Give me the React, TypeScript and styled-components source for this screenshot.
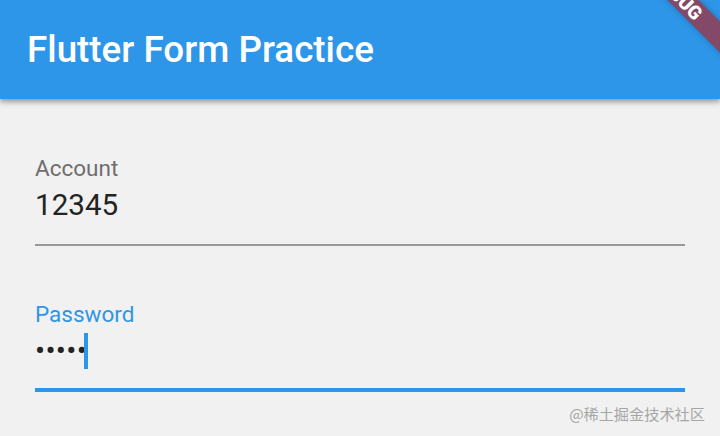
import React from 'react';
import styled, { createGlobalStyle } from 'styled-components';

const BLUE = '#2D96E9';

const GlobalStyle = createGlobalStyle`
  html, body {
    margin: 0;
    padding: 0;
    background: #f1f1f1;
  }
  * {
    box-sizing: border-box;
  }
`;

/** 가로 720 x 세로 436 화면 */
const App = () => (
  <Screen>
    <GlobalStyle />
    <AppBar>
      <Title>Flutter Form Practice</Title>
    </AppBar>
    <Form>
      <Field $focused={false}>
        <Label $focused={false}>Account</Label>
        <Value>12345</Value>
      </Field>
      <Field $focused>
        <Label $focused>Password</Label>
        <Value>
          <Dots>•••••</Dots>
          <Cursor />
        </Value>
      </Field>
    </Form>
    <DebugBanner>DEBUG</DebugBanner>
    <Watermark>@稀土掘金技术社区</Watermark>
  </Screen>
);

export default App;

const Screen = styled.div`
  position: relative;
  width: 720px;
  height: 436px;
  overflow: hidden;
  background: #f1f1f1;
  font-family: Roboto, 'Noto Sans', sans-serif;
`;

const AppBar = styled.header`
  position: relative;
  z-index: 1;
  height: 99px;
  display: flex;
  align-items: center;
  padding-left: 27px;
  background: ${BLUE};
  box-shadow: 0 2px 4px rgba(0, 0, 0, 0.2), 0 4px 5px rgba(0, 0, 0, 0.14),
    0 1px 10px rgba(0, 0, 0, 0.12);
`;

const Title = styled.h1`
  margin: 0;
  font-size: 36.8px;
  font-weight: 500;
  color: #ffffff;
  line-height: normal;
`;

const Form = styled.main`
  display: flex;
  flex-direction: column;
  gap: 55.3px;
  padding: 56.3px 35px 0 35px;
`;

const Field = styled.div<{ $focused: boolean }>`
  display: flex;
  flex-direction: column;
  gap: 5.4px;
  border-bottom: ${(p) => (p.$focused ? `4px solid ${BLUE}` : '2px solid #9a9a9a')};
  padding-bottom: ${(p) => (p.$focused ? '19.3px' : '21.3px')};
`;

const Label = styled.label<{ $focused: boolean }>`
  font-size: 22.5px;
  line-height: 26px;
  color: ${(p) => (p.$focused ? BLUE : '#6e6e6e')};
`;

const Value = styled.div`
  display: flex;
  align-items: center;
  height: 36px;
  font-size: 29.6px;
  line-height: 36px;
  color: #232323;
`;

const Dots = styled.span`
  font-size: 30px;
  letter-spacing: 0.3px;
`;

const Cursor = styled.span`
  display: inline-block;
  width: 4px;
  height: 36px;
  margin-left: -3.5px;
  background: ${BLUE};
`;

const DebugBanner = styled.div`
  position: absolute;
  z-index: 2;
  left: 598px;
  top: -16px;
  width: 160px;
  height: 22px;
  display: flex;
  align-items: center;
  justify-content: center;
  transform: rotate(45deg);
  background: rgba(183, 28, 28, 0.63);
  box-shadow: 0 0 6px rgba(0, 0, 0, 0.25);
  color: #ffffff;
  font-size: 19px;
  font-weight: 900;
  line-height: 1;
`;

const Watermark = styled.div`
  position: absolute;
  right: 15px;
  bottom: 15px;
  font-family: 'Noto Sans CJK SC', 'Noto Sans', sans-serif;
  font-size: 15.2px;
  line-height: 1;
  color: #a6a6a6;
`;
